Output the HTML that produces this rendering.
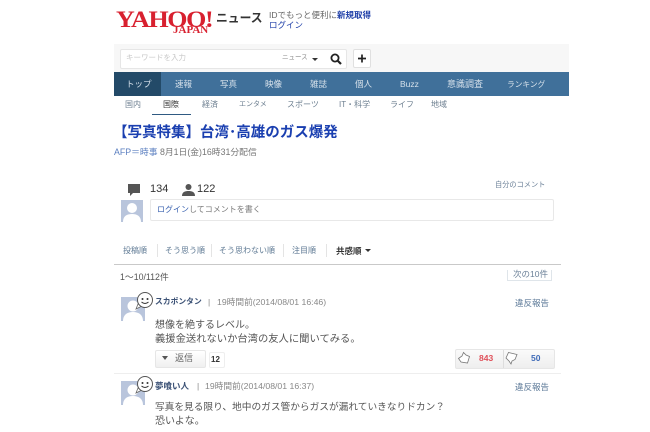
<!DOCTYPE html>
<html lang="ja"><head><meta charset="utf-8"><style>
html,body{margin:0;padding:0;background:#fff}
body{width:650px;height:432px;overflow:hidden;position:relative;font-family:"Liberation Sans","Noto Sans CJK JP",sans-serif;color:#555}
#w{position:absolute;left:0;top:0;width:650px;height:432px;filter:blur(.3px)}
.a{position:absolute;white-space:nowrap;line-height:1}
.b{position:absolute}
.nav{color:#d5e0ea;font-size:8.500px;top:80px}
.sub{color:#6d7f90;font-size:8px;top:101px}
.sort{color:#5f7a94;font-size:8px;top:247px}
.sep{position:absolute;width:1px;height:13px;top:244px;background:#e4e4e4}
</style></head><body><div id="w">
<div class="a" style="left:116px;top:8px;font:bold 23px/1 'Liberation Serif',serif;color:#d8202f;letter-spacing:-1.2px;transform:scaleX(1.13);transform-origin:left">YAHOO!</div>
<div class="a" style="left:173px;top:25px;font:bold 11px/1 'Liberation Serif',serif;color:#d8202f">JAPAN</div>
<div class="a" style="left:216px;top:13px;font-size:11.800px;color:#333;font-weight:bold">ニュース</div>
<div class="a" style="left:269px;top:11px;font-size:8.500px;color:#666">IDでもっと便利に<b style="color:#1f3fa8">新規取得</b></div>
<div class="a" style="left:269px;top:21px;font-size:8.500px;color:#1f3fa8">ログイン</div>

<div class="b" style="left:114px;top:44px;width:455px;height:28px;background:#f7f7f7"></div>
<div class="b" style="left:120px;top:49px;width:225px;height:18px;background:#fff;border:1px solid #e6e6e6;border-radius:2px"></div>
<div class="a" style="left:126px;top:54px;font-size:7.500px;color:#c8c8c8">キーワードを入力</div>
<div class="a" style="left:282px;top:55px;font-size:6.500px;color:#8a8a8a">ニュース</div>
<div class="b" style="left:312px;top:58px;border:3px solid transparent;border-top:3px solid #333;border-bottom:0"></div>
<svg class="b" style="left:329px;top:52px" width="14" height="14" viewBox="0 0 14 14"><circle cx="6" cy="6" r="3.600" fill="none" stroke="#222" stroke-width="1.800"/><path d="M8.600 8.600L12 12" stroke="#222" stroke-width="2.200"/></svg>
<div class="b" style="left:353px;top:49px;width:16px;height:17px;background:#fff;border:1px solid #e0e0e0;border-radius:2px"></div>
<svg class="b" style="left:353px;top:50px" width="18" height="18" viewBox="0 0 18 18"><path d="M5 8.500h8M9 4.500v8" stroke="#222" stroke-width="1.700"/></svg>

<div class="b" style="left:114px;top:72px;width:455px;height:24px;background:#40709a"></div>
<div class="b" style="left:114px;top:72px;width:47px;height:24px;background:#234a68"></div>
<div class="a nav" style="left:126px">トップ</div>
<div class="a nav" style="left:175px">速報</div>
<div class="a nav" style="left:220px">写真</div>
<div class="a nav" style="left:265px">映像</div>
<div class="a nav" style="left:310px">雑誌</div>
<div class="a nav" style="left:355px">個人</div>
<div class="a nav" style="left:400px">Buzz</div>
<div class="a nav" style="left:447px;font-size:9px">意識調査</div>
<div class="a nav" style="left:507px;font-size:7.700px;top:81px">ランキング</div>

<div class="a sub" style="left:125px">国内</div>
<div class="a sub" style="left:163px;color:#333">国際</div>
<div class="b" style="left:152px;top:114px;width:39px;height:1px;background:#2f5a82"></div>
<div class="a sub" style="left:202px">経済</div>
<div class="a sub" style="left:239px;font-size:7px">エンタメ</div>
<div class="a sub" style="left:287px">スポーツ</div>
<div class="a sub" style="left:339px">IT・科学</div>
<div class="a sub" style="left:390px">ライフ</div>
<div class="a sub" style="left:431px">地域</div>

<div class="a" style="left:113px;top:126px;font-size:14.500px;font-weight:bold;color:#1a3fb0">【写真特集】台湾･高雄のガス爆発</div>
<div class="a" style="left:114px;top:148px;font-size:8.800px;color:#5b7fc0">AFP＝時事 <span style="color:#777">8月1日(金)16時31分配信</span></div>

<svg class="b" style="left:128px;top:184px" width="13" height="14" viewBox="0 0 13 14"><path d="M0 0h12v9H5L2 12V9H0z" fill="#555"/></svg>
<div class="a" style="left:150px;top:184px;font-size:11px;color:#333">134</div>
<svg class="b" style="left:182px;top:184px" width="13" height="12" viewBox="0 0 13 12"><circle cx="6.500" cy="3" r="3" fill="#555"/><path d="M0 12c0-4 3-5 6.500-5s6.500 1 6.500 5z" fill="#555"/></svg>
<div class="a" style="left:197px;top:184px;font-size:11px;color:#333">122</div>
<div class="a" style="left:495px;top:181px;font-size:7.200px;color:#6c8198">自分のコメント</div>

<svg class="b" style="left:121px;top:200px" width="22" height="22" viewBox="0 0 22 22"><rect width="22" height="22" fill="#b9c5dc"/><circle cx="11" cy="8" r="5" fill="#fff"/><path d="M2 22c0-6 4-8 9-8s9 2 9 8z" fill="#fff"/></svg>
<div class="b" style="left:150px;top:199px;width:402px;height:20px;border:1px solid #e8e8e8;border-radius:2px"></div>
<div class="a" style="left:157px;top:206px;font-size:8px;color:#777"><span style="color:#3a62b0">ログイン</span>してコメントを書く</div>

<div class="a sort" style="left:123px">投稿順</div><div class="sep" style="left:157px"></div>
<div class="a sort" style="left:165px">そう思う順</div><div class="sep" style="left:211px"></div>
<div class="a sort" style="left:219px">そう思わない順</div><div class="sep" style="left:283px"></div>
<div class="a sort" style="left:292px">注目順</div><div class="sep" style="left:326px"></div>
<div class="a sort" style="left:336px;color:#333;font-weight:bold;font-size:8.500px">共感順</div>
<div class="b" style="left:365px;top:249px;border:3.500px solid transparent;border-top:3.500px solid #333;border-bottom:0"></div>
<div class="b" style="left:114px;top:264px;width:447px;height:1px;background:#c9c9c9"></div>
<div class="a" style="left:120px;top:273px;font-size:8.800px;color:#555">1～10/112件</div>
<div class="b" style="left:507px;top:270px;width:43px;height:10px;border:1px solid #dfe5ea;border-top:0"></div>
<div class="a" style="left:513px;top:270px;font-size:8.500px;color:#6c8198">次の10件</div>

<svg class="b" style="left:121px;top:291px" width="35" height="30" viewBox="0 0 35 30"><rect y="6" width="24" height="24" fill="#b9c5dc"/><circle cx="12" cy="15" r="5.500" fill="#fff"/><path d="M2 30c0-6 4-9 10-9s10 3 10 9z" fill="#fff"/><path d="M17 13l-2 5 6-3z" fill="#fff" stroke="#666" stroke-width=".8"/><circle cx="24" cy="9" r="7.500" fill="#fff" stroke="#555"/><circle cx="21.500" cy="8" r="1" fill="#333"/><circle cx="26.500" cy="8" r="1" fill="#333"/><path d="M20.500 11q3.500 3 7 0" fill="none" stroke="#333"/></svg>
<div class="a" style="left:155px;top:298px;font-size:7.800px;font-weight:bold;color:#3c5276">スカポンタン</div>
<div class="a" style="left:208px;top:298px;font-size:8.500px;color:#888">|</div>
<div class="a" style="left:217px;top:298px;font-size:8.700px;color:#888">19時間前(2014/08/01 16:46)</div>
<div class="a" style="left:515px;top:299px;font-size:8.500px;color:#5d7a98">違反報告</div>
<div class="a" style="left:155px;top:321px;font-size:10px;color:#555">想像を絶するレベル。</div>
<div class="a" style="left:155px;top:335px;font-size:10.300px;color:#555">義援金送れないか台湾の友人に聞いてみる。</div>

<div class="b" style="left:155px;top:350px;width:49px;height:16px;background:linear-gradient(#fff,#efefef);border:1px solid #e6e6e6;border-radius:2px"></div>
<div class="b" style="left:162px;top:356px;border:3px solid transparent;border-top:4px solid #555;border-bottom:0"></div>
<div class="a" style="left:175px;top:354px;font-size:9px;color:#666">返信</div>
<div class="b" style="left:209px;top:352px;width:14px;height:14px;border:1px solid #eee;border-radius:2px"></div>
<div class="a" style="left:211px;top:356px;font-size:8px;font-weight:bold;color:#333">12</div>

<div class="b" style="left:455px;top:349px;width:98px;height:18px;background:linear-gradient(#fafafa,#eee);border:1px solid #e6e6e6;border-radius:2px"></div>
<div class="b" style="left:503px;top:350px;width:1px;height:18px;background:#ddd"></div>
<svg class="b" style="left:457px;top:351px" width="14" height="14" viewBox="0 0 14 14"><path d="M1.500 7.500L5 5 6.500 1.500 9 4l3.500 1.500-2 6.500-6.500-1z" fill="#fff" stroke="#777" stroke-width=".8"/></svg>
<div class="a" style="left:479px;top:354px;font-size:8.500px;font-weight:bold;color:#e0505a">843</div>
<svg class="b" style="left:505px;top:351px" width="14" height="14" viewBox="0 0 14 14"><path d="M3.500 1.500l8.500 2-2 5-3 1.500-1 3-2-3-3-3z" fill="#fff" stroke="#777" stroke-width=".8"/></svg>
<div class="a" style="left:531px;top:354px;font-size:8.500px;font-weight:bold;color:#3f6bb8">50</div>
<div class="b" style="left:114px;top:373px;width:447px;height:1px;background:#eee"></div>

<svg class="b" style="left:121px;top:375px" width="35" height="30" viewBox="0 0 35 30"><rect y="6" width="24" height="24" fill="#b9c5dc"/><circle cx="12" cy="15" r="5.500" fill="#fff"/><path d="M2 30c0-6 4-9 10-9s10 3 10 9z" fill="#fff"/><path d="M17 13l-2 5 6-3z" fill="#fff" stroke="#666" stroke-width=".8"/><circle cx="24" cy="9" r="7.500" fill="#fff" stroke="#555"/><circle cx="21.500" cy="8" r="1" fill="#333"/><circle cx="26.500" cy="8" r="1" fill="#333"/><path d="M20.500 11q3.500 3 7 0" fill="none" stroke="#333"/></svg>
<div class="a" style="left:155px;top:382px;font-size:8.500px;font-weight:bold;color:#3c5276">夢喰い人</div>
<div class="a" style="left:197px;top:382px;font-size:8.500px;color:#888">|</div>
<div class="a" style="left:205px;top:382px;font-size:8.700px;color:#888">19時間前(2014/08/01 16:37)</div>
<div class="a" style="left:515px;top:383px;font-size:8.500px;color:#5d7a98">違反報告</div>
<div class="a" style="left:155px;top:403px;font-size:9.700px;color:#555">写真を見る限り、地中のガス管からガスが漏れていきなりドカン？</div>
<div class="a" style="left:155px;top:417px;font-size:10px;color:#555">恐いよな。</div>
</div></body></html>
